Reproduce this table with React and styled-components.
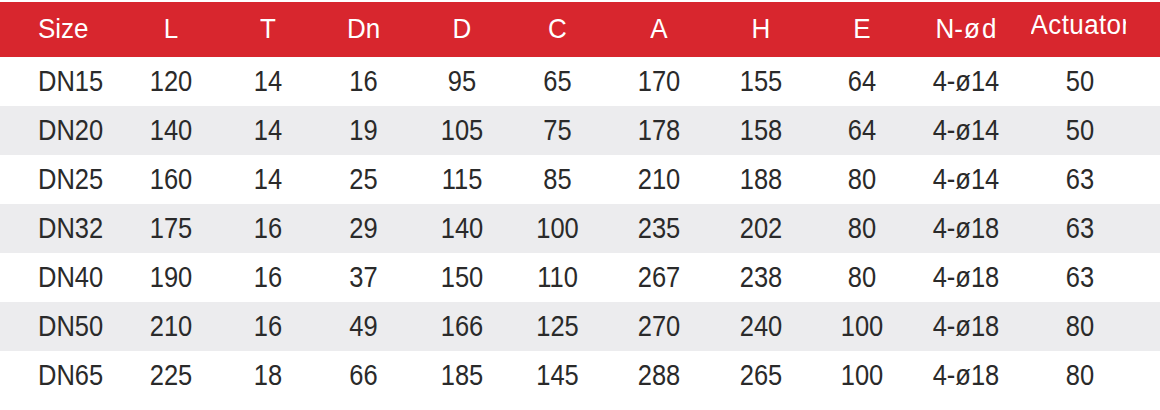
import React from 'react';
import styled, { createGlobalStyle } from 'styled-components';

const GlobalStyle = createGlobalStyle`
  html, body {
    margin: 0;
    padding: 0;
    background: #ffffff;
  }
  body {
    font-family: "Liberation Sans", Arial, Helvetica, sans-serif;
  }
`;

const COLUMNS = '122px 98px 96px 95px 102px 89px 114px 90px 112px 96px 132px 1fr';

const Table = styled.div`
  width: 1160px;
  padding-top: 2px;
  display: flex;
  flex-direction: column;
`;

const HeaderRow = styled.div`
  display: grid;
  grid-template-columns: ${COLUMNS};
  height: 55px;
  align-items: center;
  background-color: #d8262e;
  color: #ffffff;
  font-size: 26px;
`;

const BodyRow = styled.div`
  display: grid;
  grid-template-columns: ${COLUMNS};
  height: 49px;
  align-items: center;
  background-color: ${(p) => (p.$shaded ? '#ececee' : '#ffffff')};
  color: #2a2a2a;
  font-size: 25.5px;
`;

const Cell = styled.div`
  display: flex;
  justify-content: ${(p) => (p.$first ? 'flex-start' : 'center')};
  padding-left: ${(p) => (p.$first ? '38px' : '0')};
  white-space: nowrap;
`;

const HeadLabel = styled.span`
  display: inline-block;
  transform: translateY(${(p) => (p.$raised ? '-4px' : '0')}) scaleY(1.05);
  letter-spacing: ${(p) => (p.$clip ? '0.4px' : '0')};
  max-width: ${(p) => (p.$clip ? '95px' : 'none')};
  margin-left: ${(p) => (p.$clip ? '-4px' : '0')};
  overflow: hidden;
`;

const Phi = styled.span`
  margin: 0 2px 0 1px;
`;

const Value = styled.span`
  display: inline-block;
  transform: scaleY(1.13);
`;

const headers = ['Size', 'L', 'T', 'Dn', 'D', 'C', 'A', 'H', 'E', 'N-ød', 'Actuator'];

const rows = [
  ['DN15', '120', '14', '16', '95', '65', '170', '155', '64', '4-ø14', '50'],
  ['DN20', '140', '14', '19', '105', '75', '178', '158', '64', '4-ø14', '50'],
  ['DN25', '160', '14', '25', '115', '85', '210', '188', '80', '4-ø14', '63'],
  ['DN32', '175', '16', '29', '140', '100', '235', '202', '80', '4-ø18', '63'],
  ['DN40', '190', '16', '37', '150', '110', '267', '238', '80', '4-ø18', '63'],
  ['DN50', '210', '16', '49', '166', '125', '270', '240', '100', '4-ø18', '80'],
  ['DN65', '225', '18', '66', '185', '145', '288', '265', '100', '4-ø18', '80'],
];

const App = () => (
  <>
    <GlobalStyle />
    <Table>
      <HeaderRow>
        {headers.map((h, i) => (
          <Cell key={h} $first={i === 0}>
            {h === 'N-ød' ? (
              <HeadLabel>
                N-<Phi>ø</Phi>d
              </HeadLabel>
            ) : (
              <HeadLabel $raised={h === 'Actuator'} $clip={h === 'Actuator'}>
                {h}
              </HeadLabel>
            )}
          </Cell>
        ))}
        <Cell />
      </HeaderRow>
      {rows.map((row, r) => (
        <BodyRow key={row[0]} $shaded={r % 2 === 1}>
          {row.map((v, i) => (
            <Cell key={i} $first={i === 0}>
              <Value>{v}</Value>
            </Cell>
          ))}
          <Cell />
        </BodyRow>
      ))}
    </Table>
  </>
);

export default App;
